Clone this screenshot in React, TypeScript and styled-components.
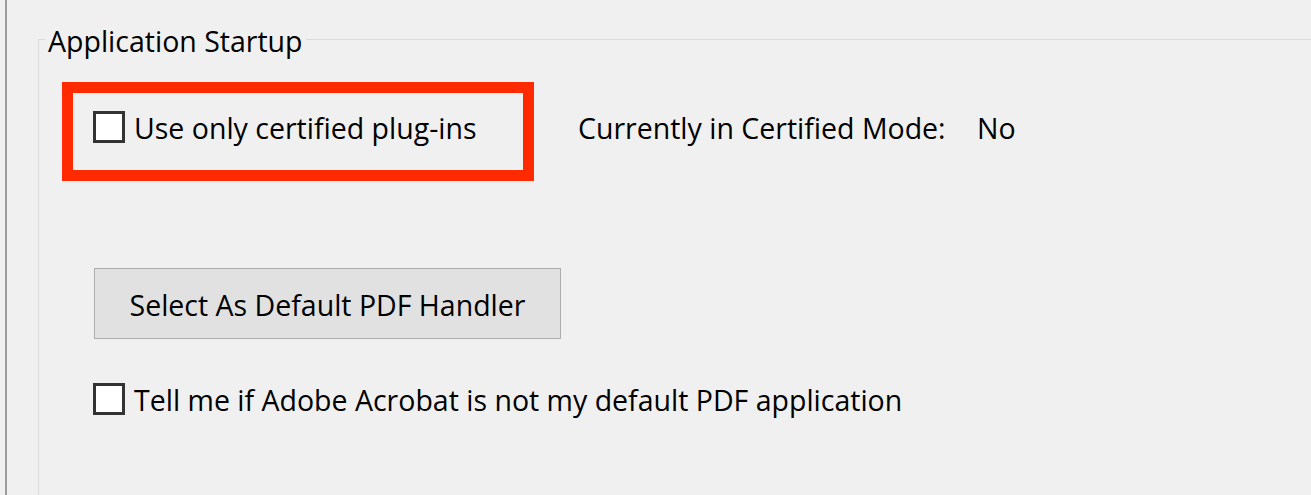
import React from "react";
import styled, { createGlobalStyle } from "styled-components";

const GlobalStyle = createGlobalStyle`
  html, body { margin: 0; padding: 0; background: #f0f0f0; }
  body {
    font-family: "Open Sans", "Noto Sans", "Liberation Sans", sans-serif;
    font-size: 28.5px;
    color: #000;
  }
  * { box-sizing: border-box; }
`;

const Page = styled.div`
  width: 1311px;
  height: 495px;
  overflow: hidden;
  padding-left: 5px;
  display: flex;
  background: #f0f0f0;
`;

const Frame = styled.div`
  flex: 1;
  display: flex;
  flex-direction: column;
  border-left: 2px solid #9c9c9c;
  padding: 20px 0 0 31px;
`;

const Group = styled.fieldset`
  flex: 1;
  margin: 0;
  min-width: 0;
  border: 1px solid #dcdcdc;
  border-right: none;
  border-bottom: none;
  padding: 24px 0 0 6px;
  display: flex;
  flex-direction: column;
`;

const Legend = styled.legend`
  margin: 0;
  padding: 4px 3px 0;
  line-height: 34px;
  white-space: nowrap;
`;

const Body = styled.div`
  padding-left: 17px;
  display: flex;
  flex-direction: column;
  align-items: flex-start;
`;

const StatusRow = styled.div`
  display: flex;
  align-items: flex-start;
`;

const Highlight = styled.div`
  width: 472px;
  height: 99px;
  border: 11px solid #ff2a00;
  padding: 17px 0 0 20px;
`;

const CheckRow = styled.label<{ $indent?: number; $top?: number }>`
  display: flex;
  align-items: center;
  gap: 9px;
  margin-left: ${(p) => p.$indent ?? 0}px;
  margin-top: ${(p) => p.$top ?? 0}px;
  cursor: default;
`;

const Box = styled.input.attrs({ type: "checkbox" })`
  appearance: none;
  -webkit-appearance: none;
  margin: 0;
  width: 32px;
  height: 32px;
  flex: none;
  background: #fff;
  border: 3px solid #333;
  border-radius: 0;
`;

const Text = styled.span<{ $width?: number }>`
  line-height: 32px;
  padding-top: 2px;
  white-space: nowrap;
  ${(p) => (p.$width ? `width: ${p.$width}px;` : "")}
`;

const StatusText = styled(Text)`
  margin-top: 28px;
`;

const StatusLabel = styled(StatusText)`
  margin-left: 44px;
`;

const Button = styled.button`
  margin: 87px 0 0 32px;
  width: 467px;
  height: 71px;
  padding: 2px 0 0;
  background: #e1e1e1;
  border: 1px solid #adadad;
  border-radius: 0;
  font: inherit;
  color: #000;
  display: flex;
  align-items: center;
  justify-content: center;
  line-height: 34px;
`;

export default function App() {
  return (
    <>
      <GlobalStyle />
      <Page>
        <Frame>
          <Group>
            <Legend>Application Startup</Legend>
            <Body>
              <StatusRow>
                <Highlight>
                  <CheckRow>
                    <Box />
                    <Text>Use only certified plug-ins</Text>
                  </CheckRow>
                </Highlight>
                <StatusLabel $width={399}>Currently in Certified Mode:</StatusLabel>
                <StatusText>No</StatusText>
              </StatusRow>
              <Button type="button">Select As Default PDF Handler</Button>
              <CheckRow $indent={31} $top={43}>
                <Box />
                <Text>Tell me if Adobe Acrobat is not my default PDF application</Text>
              </CheckRow>
            </Body>
          </Group>
        </Frame>
      </Page>
    </>
  );
}
